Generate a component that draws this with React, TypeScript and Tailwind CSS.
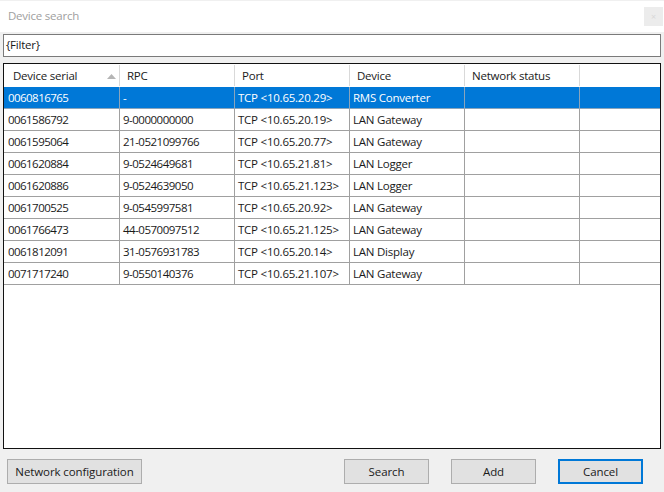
const rows = [
  ['0060816765', '-', 'TCP <10.65.20.29>', 'RMS Converter'],
  ['0061586792', '9-0000000000', 'TCP <10.65.20.19>', 'LAN Gateway'],
  ['0061595064', '21-0521099766', 'TCP <10.65.20.77>', 'LAN Gateway'],
  ['0061620884', '9-0524649681', 'TCP <10.65.21.81>', 'LAN Logger'],
  ['0061620886', '9-0524639050', 'TCP <10.65.21.123>', 'LAN Logger'],
  ['0061700525', '9-0545997581', 'TCP <10.65.20.92>', 'LAN Gateway'],
  ['0061766473', '44-0570097512', 'TCP <10.65.21.125>', 'LAN Gateway'],
  ['0061812091', '31-0576931783', 'TCP <10.65.20.14>', 'LAN Display'],
  ['0071717240', '9-0550140376', 'TCP <10.65.21.107>', 'LAN Gateway'],
]

const widths = ['w-[116px]', 'w-[115px]', 'w-[115px]', 'w-[115px]', 'w-[115px]']
const headers = ['Device serial', 'RPC', 'Port', 'Device', 'Network status']

// the serial and RPC numbers sit tighter than the rest of the text
const cellStyles = ['pl-[4px] tracking-[-0.55px]', 'pl-[3px] tracking-[-0.5px]', 'pl-[3px]', 'pl-[3px]', 'pl-[3px]']

function Button({ label, width, active }: { label: string; width: string; active?: boolean }) {
  return (
    <button
      className={`${width} h-[25px] bg-[#e1e1e1] text-[11.5px] tracking-[-0.1px] text-[#1a1a1a] ${active ? 'border-2 border-[#0078d7]' : 'border border-[#adadad]'}`}
    >
      {label}
    </button>
  )
}

export default function App() {
  return (
    <div className="w-[664px] h-[492px] bg-[#f0f0f0] flex flex-col overflow-hidden font-['Open_Sans','Liberation_Sans',sans-serif] text-[11.5px] tracking-[-0.23px] leading-none text-[#1a1a1a]">
      <div className="h-[31px] shrink-0 mt-px bg-white flex items-center justify-between pl-2 pr-[1px]">
        <span className="text-[#a0a0a0] pb-px">Device search</span>
        <div className="w-[19px] h-[19px] bg-[#ececec] flex items-center justify-center text-[9px] text-[#d8d8d8]">×</div>
      </div>

      <div className="mx-[3px] mt-[2px] h-[23px] w-[658px] shrink-0 bg-white border border-[#7a7a7a] flex items-center pl-[2px] pb-px">
        {'{Filter}'}
      </div>

      <div className="mx-[3px] mt-[6px] w-[658px] h-[386px] shrink-0 bg-white border border-[#111] pt-px">
        <div className="flex h-[22px] pb-px">
          {headers.map((h, i) => (
            <div key={h} className={`${widths[i]} relative flex items-center border-r border-[#d9d9d9] ${i === 0 ? 'pl-[9px]' : 'pl-[7px]'}`}>
              {h}
              {i === 0 && (
                <svg className="absolute right-[3px] top-[9px]" width="9" height="5" viewBox="0 0 9 5">
                  <path d="M4.5 0L9 5H0z" fill="#b5b5b5" />
                </svg>
              )}
            </div>
          ))}
        </div>
        {rows.map((row, r) => (
          <div key={row[0]} className={`flex h-[22px] border-b ${r === 0 ? 'bg-[#0078d7] text-white border-[#8aa4bb]' : 'border-[#a0a0a0]'}`}>
            {[...row, ''].map((cell, i) => (
              <div key={i} className={`${widths[i]} ${cellStyles[i]} flex items-center border-r ${r === 0 ? 'border-[#8aa4bb]' : 'border-[#a0a0a0]'}`}>
                {cell}
              </div>
            ))}
            <div className={`w-[80px] border-r ${r === 0 ? 'border-[#0078d7]' : 'border-white'}`} />
          </div>
        ))}
      </div>

      <div className="flex mt-[10px] pl-[7px] pr-[21px]">
        <Button label="Network configuration" width="w-[135px]" />
        <div className="ml-auto flex gap-[22px]">
          <Button label="Search" width="w-[85px]" />
          <Button label="Add" width="w-[85px]" />
          <Button label="Cancel" width="w-[85px]" active />
        </div>
      </div>
    </div>
  )
}
